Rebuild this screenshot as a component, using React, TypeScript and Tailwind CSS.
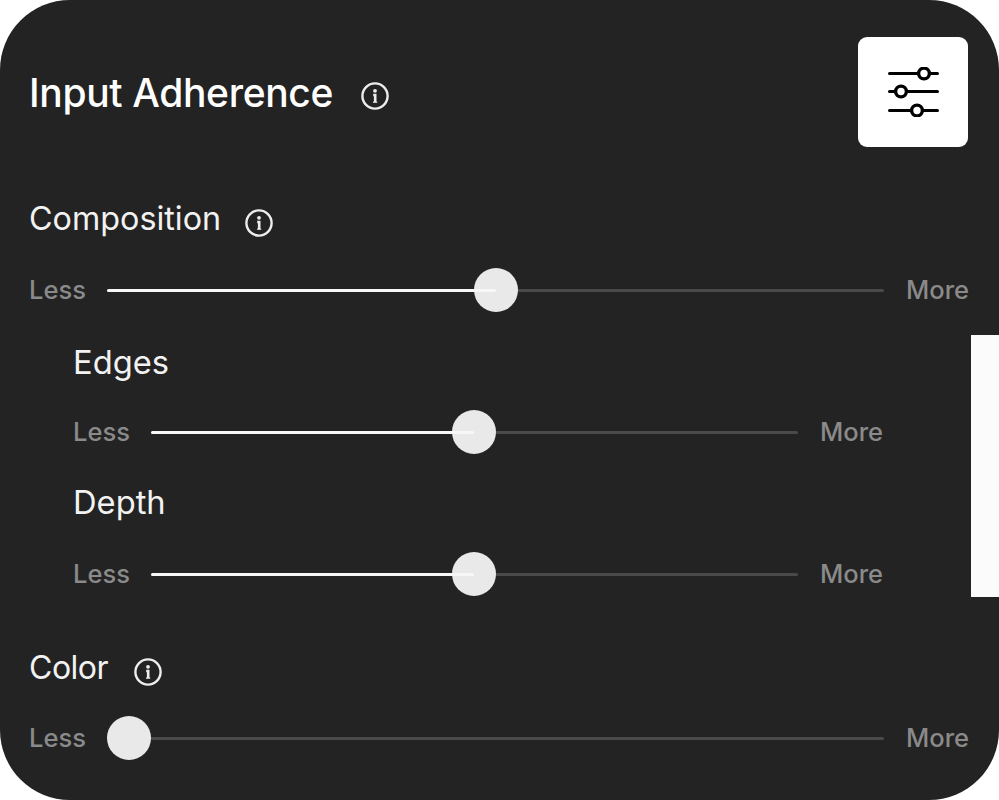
import React from "react";

const InfoIcon = () => (
  <svg width="28" height="28" viewBox="0 0 28 28" fill="none" className="shrink-0">
    <circle cx="14" cy="14" r="12.6" stroke="#ededed" strokeWidth="2.4" />
    <circle cx="14" cy="8.8" r="1.9" fill="#ededed" />
    <path d="M12.2 13h2v7" stroke="#ededed" strokeWidth="2.6" />
    <path d="M12 20.2h4.2" stroke="#ededed" strokeWidth="1.2" />
  </svg>
);

const SlidersIcon = () => (
  <svg width="54" height="50" viewBox="0 0 54 50" fill="none">
    <g stroke="#000" strokeWidth="3" strokeLinecap="round">
      <path d="M3.5 6.5h48M3.5 24.5h48M3.5 43.5h48" />
    </g>
    <g fill="#fff" stroke="#000" strokeWidth="3.4">
      <circle cx="38" cy="6.5" r="5.4" />
      <circle cx="15" cy="24.5" r="5.4" />
      <circle cx="31" cy="43.5" r="5.4" />
    </g>
  </svg>
);

function Slider({ value }: { value: number }) {
  return (
    <div className="flex h-[44px] items-center text-[25.5px] font-medium text-[#8a8a8a]">
      <span className="-ml-px w-[78px] shrink-0 leading-none">Less</span>
      <div className="relative h-[3px] flex-1 rounded-full bg-[#4a4a4a]">
        <div
          className="absolute inset-y-0 left-0 z-10 rounded-full bg-[#f7f7f7]"
          style={{ width: `${value}px` }}
        />
        <div
          className="absolute top-1/2 h-[44px] w-[44px] -translate-x-1/2 -translate-y-1/2 rounded-full bg-[#e9e9e9]"
          style={{ left: `${Math.max(value, 22)}px` }}
        />
      </div>
      <span className="w-[85px] shrink-0 text-right leading-none">More</span>
    </div>
  );
}

export default function App() {
  return (
    <div className="min-h-screen bg-white" style={{ fontFamily: "Inter, sans-serif" }}>
      <div className="relative h-[800px] w-[999px] overflow-hidden rounded-[70px] bg-[#232323] px-[30px] pt-[37px] text-[#f2f2f2]">
        <header className="flex h-[110px] items-center justify-between">
          <div className="flex items-center gap-[28px]">
            <h1 className="-ml-px text-[39px] font-medium leading-none tracking-[-0.35px] text-white">
              Input Adherence
            </h1>
            <div className="mt-[8px]">
              <InfoIcon />
            </div>
          </div>
          <button className="mr-px flex h-[110px] w-[110px] items-center justify-center rounded-[9px] bg-white">
            <SlidersIcon />
          </button>
        </header>

        <section className="mt-[52px]">
          <div className="mb-[29px] flex h-[40px] items-center gap-[24px]">
            <h2 className="-ml-px text-[32.3px] leading-none">Composition</h2>
            <div className="mt-[7px]">
              <InfoIcon />
            </div>
          </div>
          <Slider value={389} />
        </section>

        <section className="mr-[86px] mt-[30px] pl-[44px]">
          <h3 className="-ml-px mb-[28px] flex h-[40px] items-center text-[32.7px] leading-none">Edges</h3>
          <Slider value={323} />
          <h3 className="-ml-px mb-[30px] mt-[28px] flex h-[40px] items-center text-[32.7px] leading-none">Depth</h3>
          <Slider value={323} />
        </section>

        <section className="mt-[52px]">
          <div className="mb-[28px] flex h-[40px] items-center gap-[26px]">
            <h2 className="-ml-px text-[32px] leading-none tracking-[-0.5px]">Color</h2>
            <div className="mt-[7px]">
              <InfoIcon />
            </div>
          </div>
          <Slider value={0} />
        </section>

        {/* scrollbar sliver on the right edge */}
        <div className="absolute right-0 top-[335px] h-[262px] w-[28px] bg-[#fbfbfb]" />
      </div>
    </div>
  );
}
